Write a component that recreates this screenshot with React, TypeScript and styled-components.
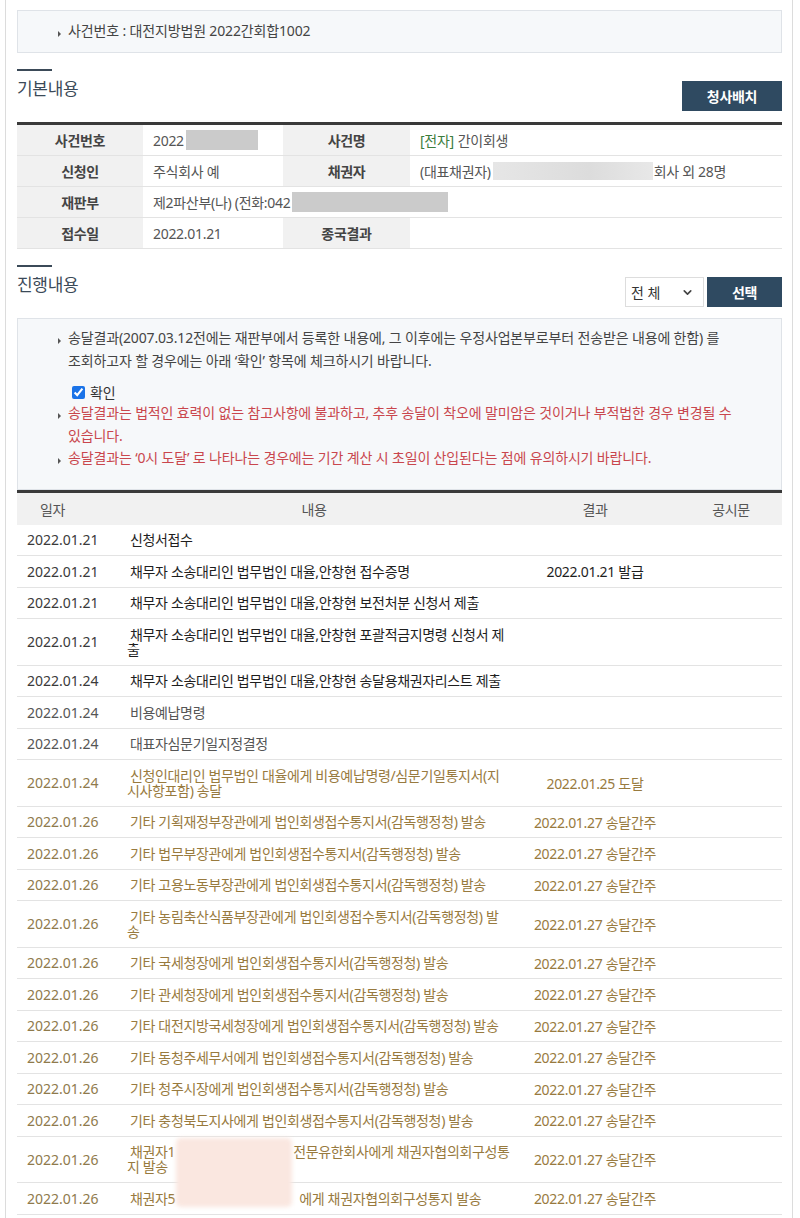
import React from 'react'
import styled, { createGlobalStyle, css } from 'styled-components'
import { ChevronDown } from 'lucide-react'

const GlobalStyle = createGlobalStyle`
  html, body { margin: 0; padding: 0; background: #fff; }
  body {
    font-family: "Noto Sans", "Noto Sans CJK KR", sans-serif;
    font-size: 14px;
    color: #333;
  }
`

const Frame = styled.div`
  box-sizing: border-box;
  min-height: 100vh;
  margin: 0 7px 0 5px;
  padding: 10px 10px 4px 11px;
  border-left: 1px solid #dcdcdc;
  border-right: 1px solid #dcdcdc;
`

const Panel = styled.div`
  background: #f6f8fa;
  border: 1px solid #dfe3e8;
  color: #444;
  letter-spacing: -0.15px;
`

const CaseBox = styled(Panel)`
  box-sizing: border-box;
  height: 43px;
  display: flex;
  align-items: center;
  padding: 0 48px 0 40px;
`

const NoticeBox = styled(Panel)`
  padding: 8px 49px 19px 40px;
  word-break: keep-all;
`

const Item = styled.div<{ $warn?: boolean }>`
  display: flex;
  align-items: flex-start;
  line-height: 22.5px;
  color: ${p => (p.$warn ? '#c9464d' : '#444')};
`

const Bullet = styled.span`
  flex: 0 0 10px;
  height: 22.5px;
  display: flex;
  align-items: center;
  padding-top: 5px;
  box-sizing: border-box;
  &::before {
    content: '';
    display: block;
    border-left: 3px solid #555;
    border-top: 3px solid transparent;
    border-bottom: 3px solid transparent;
  }
`

const CheckRow = styled.label`
  display: flex;
  align-items: center;
  gap: 5px;
  height: 20px;
  margin: 10px 0 0 14px;
  color: #333;
  input {
    margin: 0;
    width: 13px;
    height: 13px;
    accent-color: #1a73e8;
  }
`

const SectionHead = styled.div`
  display: flex;
  justify-content: space-between;
  align-items: flex-start;
  margin: 16px 0 11px;
`

const SectionTitle = styled.h2`
  margin: 0;
  font-size: 17px;
  font-weight: 400;
  line-height: 24px;
  color: #3b4a58;
  letter-spacing: -0.3px;
  &::before {
    content: '';
    display: block;
    width: 35px;
    height: 2px;
    background: #3b4a58;
    margin-bottom: 6px;
  }
`

const Controls = styled.div`
  display: flex;
  gap: 3px;
  margin-top: 12px;
`

const DarkButton = styled.button<{ $w: number }>`
  width: ${p => p.$w}px;
  height: 30px;
  border: 0;
  background: #2f4a61;
  color: #fff;
  font-family: inherit;
  font-size: 14px;
  font-weight: 700;
  letter-spacing: -0.3px;
  cursor: pointer;
`

const SelectBox = styled.div`
  box-sizing: border-box;
  width: 79px;
  height: 30px;
  display: flex;
  align-items: center;
  justify-content: space-between;
  padding: 0 9px 0 5px;
  background: #fff;
  border: 1px solid #ddd;
  color: #333;
  font-size: 14px;
`

const InfoTable = styled.div`
  display: grid;
  grid-template-columns: 126px 140px 127px 1fr;
  border-top: 3px solid #3a3a3a;
`

const cellBase = css`
  box-sizing: border-box;
  height: 31px;
  display: flex;
  align-items: center;
  border-bottom: 1px solid #e3e3e3;
  white-space: nowrap;
`

const Label = styled.div`
  ${cellBase};
  justify-content: center;
  background: #f1f1f1;
  color: #444;
  font-weight: 600;
  letter-spacing: -0.3px;
`

const Value = styled.div<{ $span?: number }>`
  ${cellBase};
  grid-column: span ${p => p.$span ?? 1};
  padding-left: 10px;
  color: #555;
  letter-spacing: -0.3px;
`

const Tag = styled.span`
  color: #3c7d3c;
  margin-right: 4px;
`

const Redact = styled.span<{ $w: number; $h?: number; $soft?: boolean }>`
  display: inline-block;
  width: ${p => p.$w}px;
  height: ${p => p.$h ?? 20}px;
  background: ${p => (p.$soft ? 'linear-gradient(90deg, #e6e6e6, #dcdcdc 60%, #e8e8e8)' : '#cbcbcb')};
  margin: 0 1px 0 2px;
`

const ProgressTable = styled.div`
  border-top: 3px solid #3a3a3a;
`

const cols = '101px 392px 170px 1fr'

const HeadRow = styled.div`
  display: grid;
  grid-template-columns: ${cols};
  height: 32px;
  background: #f1f1f1;
  color: #555;
  align-items: center;
`

const HeadCell = styled.div<{ $pad?: number }>`
  text-align: ${p => (p.$pad !== undefined ? 'left' : 'center')};
  padding-left: ${p => p.$pad ?? 0}px;
  letter-spacing: -0.3px;
`

type Tone = 'dark' | 'gray' | 'olive'

const toneColor: Record<Tone, string> = {
  dark: '#1e1e1e',
  gray: '#555',
  olive: '#987a3e',
}

const dateColor: Record<Tone, string> = {
  dark: '#3a3a3a',
  gray: '#555',
  olive: '#8f7a4c',
}

const Row = styled.div<{ $tone: Tone }>`
  display: grid;
  grid-template-columns: ${cols};
  border-bottom: 1px solid #e3e3e3;
  color: ${p => toneColor[p.$tone]};
`

const DateCell = styled.div<{ $tone: Tone }>`
  display: flex;
  align-items: center;
  padding-left: 10px;
  color: ${p => dateColor[p.$tone]};
`

const ContentCell = styled.div`
  position: relative;
  padding: 7.75px 0 7.75px 9px;
  line-height: 15px;
  letter-spacing: -0.35px;
  text-indent: 3px;
  white-space: nowrap;
`

const ResultCell = styled.div`
  display: flex;
  align-items: center;
  justify-content: center;
  letter-spacing: -0.3px;
`

const Gap = styled.span<{ $w: number }>`
  display: inline-block;
  width: ${p => p.$w}px;
`

const Smudge = styled.span`
  position: absolute;
  z-index: 2;
  left: 58px;
  top: 1px;
  width: 116px;
  height: 69px;
  background: #fae7e0;
  border-radius: 5px;
  filter: blur(2px);
`

type Entry = { d: string; c: React.ReactNode; r?: string; t: Tone }

const agency = (who: string) => `기타 ${who}에게 법인회생접수통지서(감독행정청) 발송`
const deemed = '2022.01.27 송달간주'

const entries: Entry[] = [
  { d: '2022.01.21', c: '신청서접수', t: 'dark' },
  { d: '2022.01.21', c: '채무자 소송대리인 법무법인 대율,안창현 접수증명', r: '2022.01.21 발급', t: 'dark' },
  { d: '2022.01.21', c: '채무자 소송대리인 법무법인 대율,안창현 보전처분 신청서 제출', t: 'dark' },
  { d: '2022.01.21', c: <>채무자 소송대리인 법무법인 대율,안창현 포괄적금지명령 신청서 제<br />출</>, t: 'dark' },
  { d: '2022.01.24', c: '채무자 소송대리인 법무법인 대율,안창현 송달용채권자리스트 제출', t: 'dark' },
  { d: '2022.01.24', c: '비용예납명령', t: 'gray' },
  { d: '2022.01.24', c: '대표자심문기일지정결정', t: 'gray' },
  {
    d: '2022.01.24',
    c: <>신청인대리인 법무법인 대율에게 비용예납명령/심문기일통지서(지<br />시사항포함) 송달</>,
    r: '2022.01.25 도달',
    t: 'olive',
  },
  { d: '2022.01.26', c: agency('기획재정부장관'), r: deemed, t: 'olive' },
  { d: '2022.01.26', c: agency('법무부장관'), r: deemed, t: 'olive' },
  { d: '2022.01.26', c: agency('고용노동부장관'), r: deemed, t: 'olive' },
  {
    d: '2022.01.26',
    c: <>기타 농림축산식품부장관에게 법인회생접수통지서(감독행정청) 발<br />송</>,
    r: deemed,
    t: 'olive',
  },
  { d: '2022.01.26', c: agency('국세청장'), r: deemed, t: 'olive' },
  { d: '2022.01.26', c: agency('관세청장'), r: deemed, t: 'olive' },
  { d: '2022.01.26', c: agency('대전지방국세청장'), r: deemed, t: 'olive' },
  { d: '2022.01.26', c: agency('동청주세무서'), r: deemed, t: 'olive' },
  { d: '2022.01.26', c: agency('청주시장'), r: deemed, t: 'olive' },
  { d: '2022.01.26', c: agency('충청북도지사'), r: deemed, t: 'olive' },
  {
    d: '2022.01.26',
    c: (
      <>
        채권자1<Gap $w={118} />전문유한회사에게 채권자협의회구성통<br />지 발송
        <Smudge />
      </>
    ),
    r: deemed,
    t: 'olive',
  },
  {
    d: '2022.01.26',
    c: (
      <>
        채권자5<Gap $w={124} />에게 채권자협의회구성통지 발송
      </>
    ),
    r: deemed,
    t: 'olive',
  },
]

export default function App() {
  return (
    <>
      <GlobalStyle />
      <Frame>
        <CaseBox>
          <Item>
            <Bullet />
            <span>사건번호 : 대전지방법원 2022간회합1002</span>
          </Item>
        </CaseBox>

        <SectionHead>
          <SectionTitle>기본내용</SectionTitle>
          <Controls>
            <DarkButton $w={100}>청사배치</DarkButton>
          </Controls>
        </SectionHead>

        <InfoTable>
          <Label>사건번호</Label>
          <Value>
            2022<Redact $w={72} />
          </Value>
          <Label>사건명</Label>
          <Value>
            <Tag>[전자]</Tag>간이회생
          </Value>

          <Label>신청인</Label>
          <Value>주식회사 예</Value>
          <Label>채권자</Label>
          <Value>
            (대표채권자)<Redact $w={160} $h={18} $soft />회사 외 28명
          </Value>

          <Label>재판부</Label>
          <Value $span={3}>
            제2파산부(나) (전화:042<Redact $w={156} />
          </Value>

          <Label>접수일</Label>
          <Value>2022.01.21</Value>
          <Label>종국결과</Label>
          <Value />
        </InfoTable>

        <SectionHead>
          <SectionTitle>진행내용</SectionTitle>
          <Controls>
            <SelectBox>
              <span>전 체</span>
              <ChevronDown size={13} strokeWidth={3} color="#444" />
            </SelectBox>
            <DarkButton $w={75}>선택</DarkButton>
          </Controls>
        </SectionHead>

        <NoticeBox>
          <Item>
            <Bullet />
            <span>
              송달결과(2007.03.12전에는 재판부에서 등록한 내용에, 그 이후에는 우정사업본부로부터 전송받은 내용에 한함) 를
              조회하고자 할 경우에는 아래 ‘확인’ 항목에 체크하시기 바랍니다.
            </span>
          </Item>
          <CheckRow>
            <input type="checkbox" defaultChecked />
            <span>확인</span>
          </CheckRow>
          <Item $warn>
            <Bullet />
            <span>
              송달결과는 법적인 효력이 없는 참고사항에 불과하고, 추후 송달이 착오에 말미암은 것이거나 부적법한 경우 변경될 수
              있습니다.
            </span>
          </Item>
          <Item $warn>
            <Bullet />
            <span>송달결과는 ‘0시 도달’ 로 나타나는 경우에는 기간 계산 시 초일이 산입된다는 점에 유의하시기 바랍니다.</span>
          </Item>
        </NoticeBox>

        <ProgressTable>
          <HeadRow>
            <HeadCell $pad={23}>일자</HeadCell>
            <HeadCell>내용</HeadCell>
            <HeadCell>결과</HeadCell>
            <HeadCell>공시문</HeadCell>
          </HeadRow>
          {entries.map((e, i) => (
            <Row key={i} $tone={e.t}>
              <DateCell $tone={e.t}>{e.d}</DateCell>
              <ContentCell>{e.c}</ContentCell>
              <ResultCell>{e.r ?? ''}</ResultCell>
              <div />
            </Row>
          ))}
        </ProgressTable>
      </Frame>
    </>
  )
}
